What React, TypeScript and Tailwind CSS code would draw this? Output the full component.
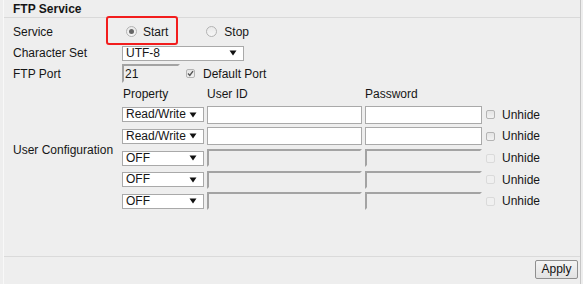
import React from 'react';

type Row = { prop: string; enabled: boolean; h: string };

const rows: Row[] = [
  { prop: 'Read/Write', enabled: true, h: 'h-[21px]' },
  { prop: 'Read/Write', enabled: true, h: 'h-[22px]' },
  { prop: 'OFF', enabled: false, h: 'h-[22px]' },
  { prop: 'OFF', enabled: false, h: 'h-[21px]' },
  { prop: 'OFF', enabled: false, h: 'h-[22px]' },
];

function Arrow() {
  return (
    <svg width="8" height="6" viewBox="0 0 8 6" className="shrink-0">
      <path d="M0.5 0.5 L7.5 0.5 L4 5.5 Z" fill="#111" />
    </svg>
  );
}

function Select({ value, w }: { value: string; w: string }) {
  return (
    <div className={`${w} h-[15px] bg-white border border-[#a9a9a9] flex items-center justify-between pl-[3px] pr-[6px] text-[12px] leading-[13px]`}>
      <span>{value}</span>
      <Arrow />
    </div>
  );
}

function Radio({ checked }: { checked?: boolean }) {
  return (
    <div className="w-[11px] h-[11px] rounded-full border border-[#b3b3b3] bg-gradient-to-b from-[#e9e9e9] to-[#f7f7f7] flex items-center justify-center">
      {checked && <div className="w-[5px] h-[5px] rounded-full bg-[#666]" />}
    </div>
  );
}

function Check({ checked, disabled }: { checked?: boolean; disabled?: boolean }) {
  return (
    <div
      className={`w-[9px] h-[9px] rounded-[2px] border flex items-center justify-center ${
        disabled ? 'border-[#dadada] bg-[#f0f0f0]' : 'border-[#b4b4b4] bg-gradient-to-b from-[#e4e4e4] to-[#f2f2f2]'
      }`}
    >
      {checked && (
        <svg width="7" height="7" viewBox="0 0 7 7">
          <path d="M1 3.6 L2.8 5.4 L6 1.2" stroke="#555" strokeWidth="1.4" fill="none" />
        </svg>
      )}
    </div>
  );
}

function TextBox({ w, enabled }: { w: string; enabled: boolean }) {
  return enabled ? (
    <div className={`${w} h-[18px] bg-white border border-[#a9a9a9]`} />
  ) : (
    <div className={`${w} h-[18px] border-2 border-t-[#a3a3a3] border-l-[#a3a3a3] border-r-[#eeeeee] border-b-[#eeeeee]`} />
  );
}

export default function App() {
  return (
    <div
      className="relative w-[583px] h-[284px] bg-[#eeeeee] overflow-hidden text-[#161616] text-[12px]"
      style={{ fontFamily: '"Liberation Sans", Arial, sans-serif' }}
    >
      <div className="ml-[3px] w-[578px] h-full border-l border-[#f8f8f8] border-r border-r-[#c6c6c6] flex flex-col">
        {/* title */}
        <div className="h-[18px] pl-[9px] pt-[2px] border-b border-[#d9d9d9] font-bold leading-[14px]">FTP Service</div>

        <div className="pl-[9px] flex flex-col">
          {/* service */}
          <div className="h-[27px] flex items-center">
            <div className="w-[109px]">Service</div>
            <div className="ml-[4px] flex items-center gap-[6px]">
              <Radio checked />
              <span>Start</span>
            </div>
            <div className="ml-[38px] flex items-center gap-[7px]">
              <Radio />
              <span>Stop</span>
            </div>
          </div>

          {/* charset */}
          <div className="h-[16px] flex items-center">
            <div className="w-[109px]">Character Set</div>
            <Select value="UTF-8" w="w-[122px]" />
          </div>

          {/* port */}
          <div className="mt-[2px] h-[21px] flex items-center">
            <div className="w-[109px]">FTP Port</div>
            <div className="w-[58px] h-[19px] border-2 border-t-[#a3a3a3] border-l-[#a3a3a3] border-r-[#eeeeee] border-b-[#eeeeee] flex items-end leading-[14px] pl-[1px]">
              21
            </div>
            <div className="ml-[6px] flex items-center gap-[8px]">
              <Check checked />
              <span>Default Port</span>
            </div>
          </div>

          {/* user configuration */}
          <div className="flex items-center">
            <div className="w-[109px] pt-[3px]">User Configuration</div>
            <div className="flex flex-col">
              <div className="h-[20px] pt-[3px] flex leading-[14px]">
                <div className="w-[85px] pl-[1px]">Property</div>
                <div className="w-[158px]">User ID</div>
                <div>Password</div>
              </div>
              {rows.map((r, i) => (
                <div key={i} className={`${r.h} flex items-center`}>
                  <Select value={r.prop} w="w-[82px]" />
                  <div className="ml-[3px]">
                    <TextBox w="w-[155px]" enabled={r.enabled} />
                  </div>
                  <div className="ml-[3px]">
                    <TextBox w="w-[117px]" enabled={r.enabled} />
                  </div>
                  <div className="ml-[4px] flex items-center gap-[7px]">
                    <Check disabled={!r.enabled} />
                    <span>Unhide</span>
                  </div>
                </div>
              ))}
            </div>
          </div>
        </div>

        <div className="flex-1" />

        {/* footer */}
        <div className="h-[28px] border-t border-[#dadada] flex justify-end items-start pt-[3px] pr-[2px]">
          <button className="w-[43px] h-[19px] border border-[#8f8f8f] rounded-[2px] bg-gradient-to-b from-[#f4f4f4] to-[#e2e2e2] text-[12px] leading-[15px] text-[#111]">
            Apply
          </button>
        </div>
      </div>

      {/* annotation */}
      <div className="absolute left-[106px] top-[16px] w-[72px] h-[29px] border-2 border-[#f21d1d] rounded-[3px]" />
    </div>
  );
}
